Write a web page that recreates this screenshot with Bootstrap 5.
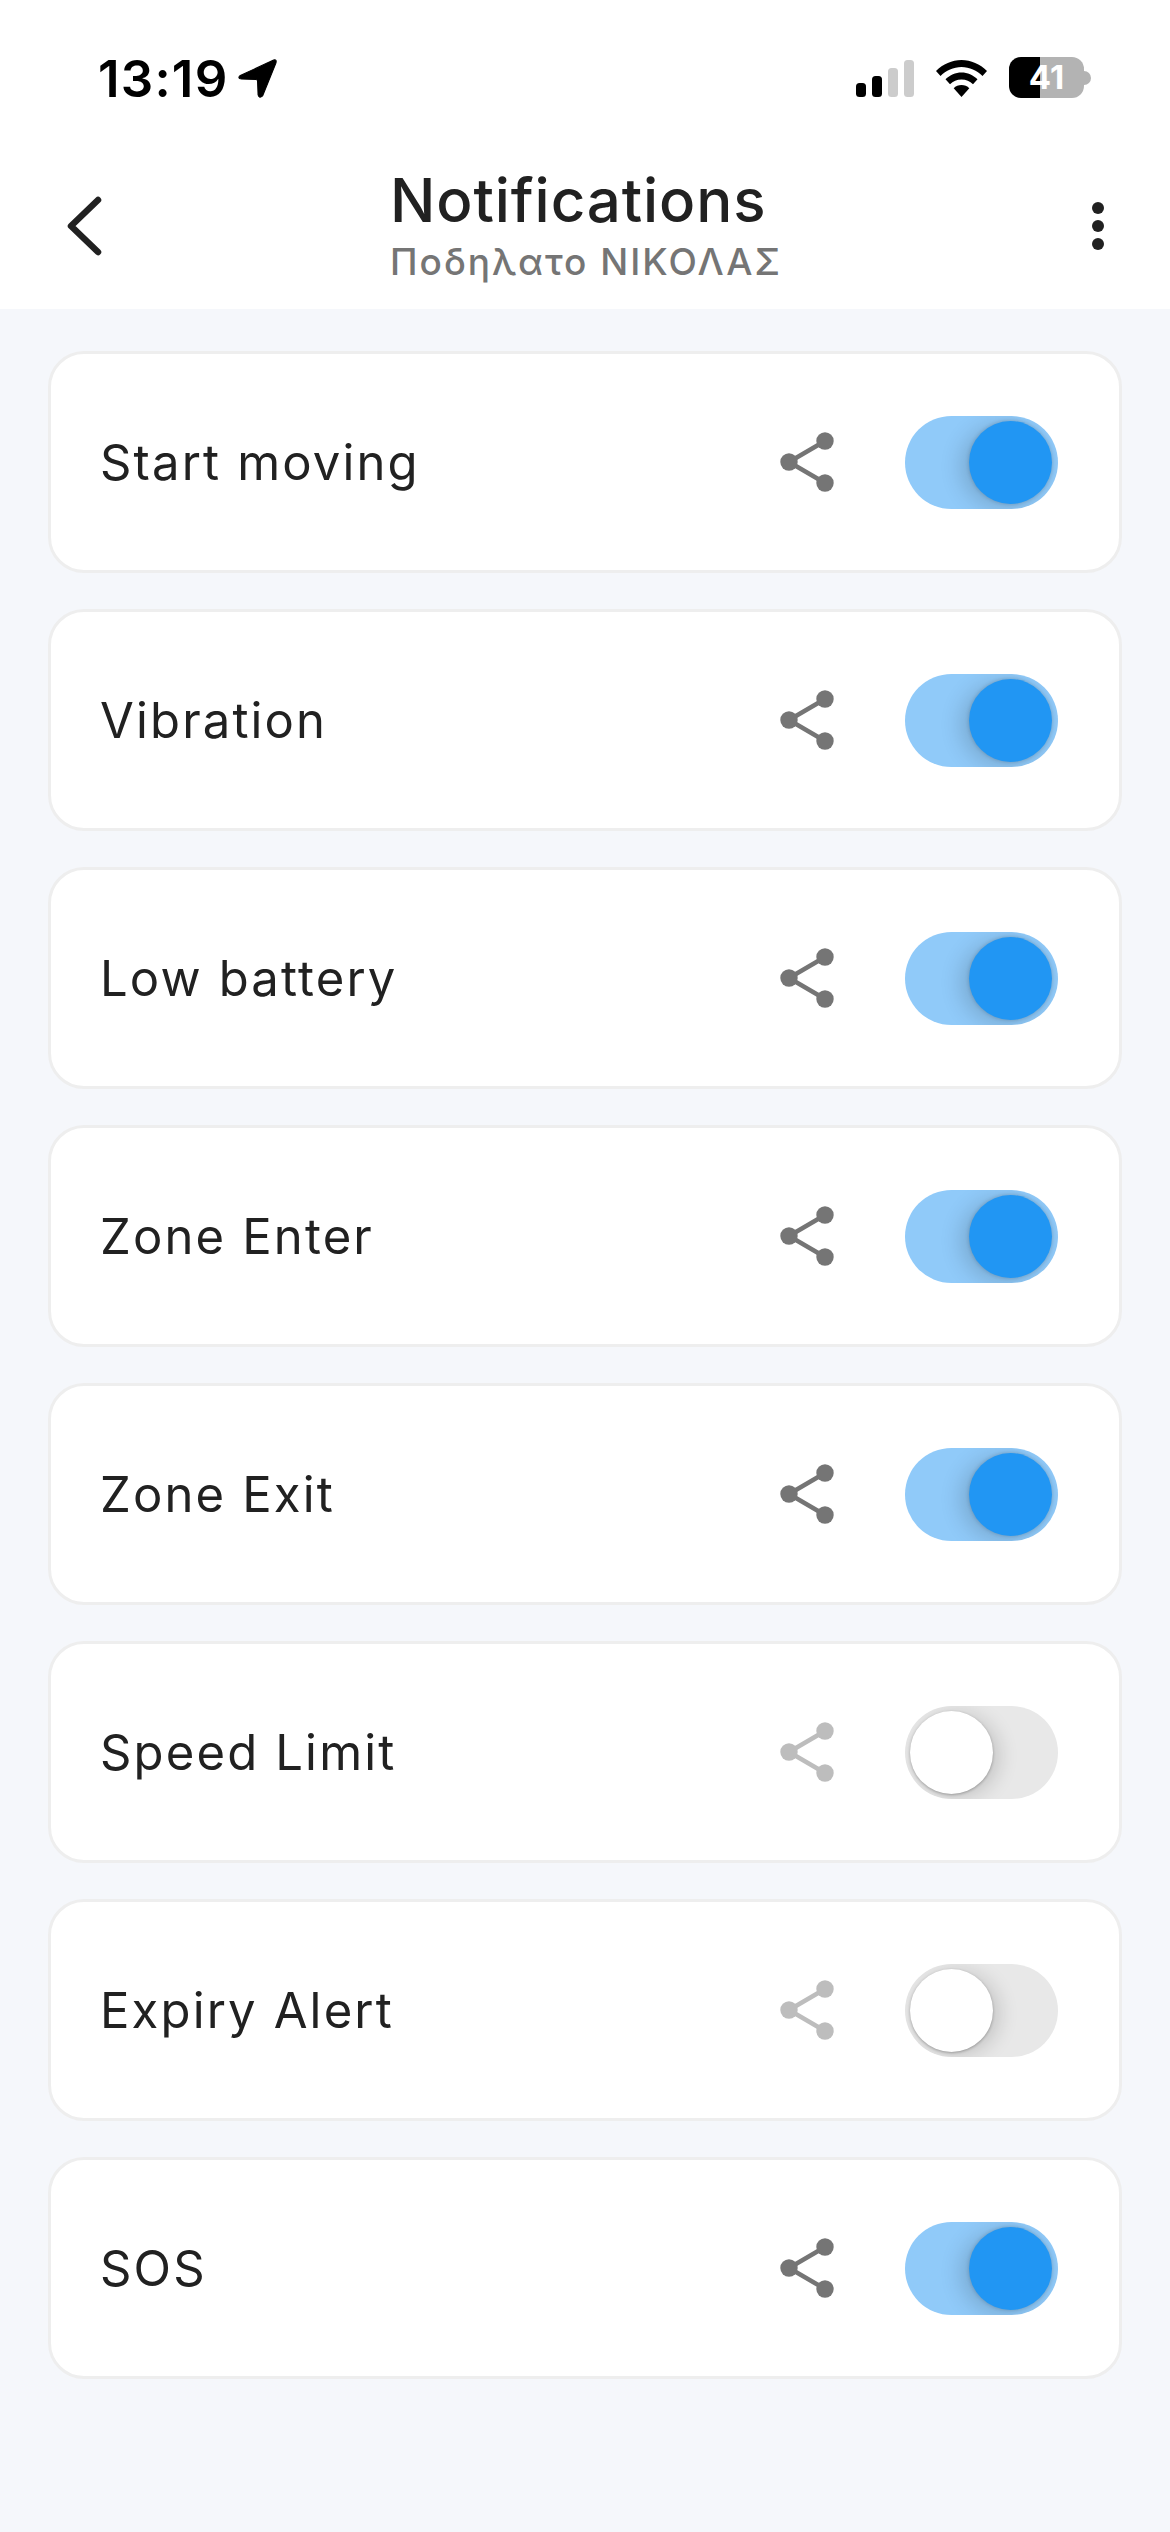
<!DOCTYPE html>
<html lang="en">
<head>
<meta charset="utf-8">
<title>Notifications</title>
<link href="https://cdn.jsdelivr.net/npm/bootstrap@5.3.0/dist/css/bootstrap.min.css" rel="stylesheet">
<style>
html,body{background:#f5f7fb;}
body{width:1170px;height:2532px;overflow:hidden;font-family:Inter,"Liberation Sans",sans-serif;color:#212121;}
.top-area{background:#fff;height:309px;}
.status-row{height:150px;padding:0 79px 0 98px;}
.time-text{font-family:Inter,"Liberation Sans",sans-serif;font-weight:600;font-size:51px;line-height:1;color:#000;letter-spacing:1.2px;}
.status-left{gap:9px;height:156px;}
.status-right{gap:30px;height:150px;padding-top:60px;}
.batt-wrap{margin-top:-3px;margin-left:-8px;}
.batt-body{width:75px;height:41px;border-radius:12px;background:linear-gradient(90deg,#000 0,#000 41%,#b3b3b3 41%,#b3b3b3 100%);color:#fff;font-family:Inter,"Liberation Sans",sans-serif;font-weight:700;font-size:33px;line-height:41px;text-align:center;}
.batt-nub{width:7px;height:14px;background:#b3b3b3;border-radius:0 7px 7px 0;}
.wifi-ico{margin-left:-8px;}
.head-row{height:159px;padding-left:66px;padding-right:66px;}
.side-slot{width:329px;margin-top:-8px;}
.side-slot-r{width:331px;margin-top:-8px;}
.title-col{width:388px;}
.head-title{font-size:60px;font-weight:500;line-height:68px;letter-spacing:.9px;margin:-10px 0 6px;color:#212121;white-space:nowrap;}
.head-sub{font-size:37px;font-weight:500;line-height:44px;letter-spacing:2px;color:#757575;white-space:nowrap;}
.list-area{padding:42px 48px 0;gap:36px;}
.notif-card{height:222px;border:3px solid #eee;border-radius:36px;background:#fff;padding:0 61px 0 49px;}
.notif-label{font-size:49px;letter-spacing:2.15px;color:#212121;line-height:1;}
.share-ico{width:54px;height:60px;color:#757575;margin-right:71px;}
.share-off{color:#bdbdbd;}
.tog-track{width:153px;height:93px;border-radius:47px;padding:0 6px;background:#90caf9;overflow:hidden;}
.tog-off{background:#e8e8e8;padding:0 5px;}
.tog-knob{width:83px;height:83px;border-radius:50%;background:#2196f3;box-shadow:-8px 4px 22px rgba(0,0,0,.16),0 0 4px rgba(0,0,0,.2);}
.tog-off .tog-knob{background:#fff;box-shadow:6px 3px 20px rgba(0,0,0,.16),0 1px 3px rgba(0,0,0,.28);}
</style>
</head>
<body>
<div class="top-area">
  <div class="status-row d-flex justify-content-between">
    <div class="status-left d-flex align-items-center">
      <span class="time-text">13:19</span>
      <svg width="40" height="40" viewBox="0 0 36 39" preserveAspectRatio="none"><path d="M33 2 L3 17 Q0 20 4 20.500 L17 21 Q18.500 21 18.500 22.500 L19 36 Q20 40 23 37 L35 5 Q36 1 33 2Z" fill="#000" stroke="#000" stroke-width="1" stroke-linejoin="round"/></svg>
    </div>
    <div class="status-right d-flex">
      <svg width="58" height="37" viewBox="0 0 58 37"><rect x="0" y="23" width="10" height="14" rx="3.500" fill="#000"/><rect x="16" y="16" width="10" height="21" rx="3.500" fill="#000"/><rect x="32" y="8" width="10" height="29" rx="3.500" fill="#ccc"/><rect x="48" y="0" width="10" height="37" rx="3.500" fill="#ccc"/></svg>
      <svg class="wifi-ico" width="51" height="37" viewBox="0 0 51 37"><path d="M25.500 0C16 0 7 4 0 11l4.500 5C10 10.500 17.500 7 25.500 7S41 10.500 46.500 16L51 11C44 4 35 0 25.500 0Z" fill="#000"/><path d="M25.500 12.500c-6 0-11.500 2.500-16 6.800l4.500 5c3-3 7-4.800 11.500-4.800s8.500 1.800 11.500 4.800l4.500-5c-4.500-4.300-10-6.800-16-6.800Z" fill="#000"/><path d="M25.500 25c-3 0-5.800 1.200-7.800 3.200L25.500 37l7.800-8.800c-2-2-4.800-3.200-7.800-3.200Z" fill="#000"/></svg>
      <div class="batt-wrap d-flex align-items-center align-self-start">
        <div class="batt-body">41</div>
        <div class="batt-nub"></div>
      </div>
    </div>
  </div>
  <div class="head-row d-flex align-items-center justify-content-between">
    <div class="side-slot d-flex">
      <svg width="36" height="60" viewBox="0 0 36 60"><path d="M32 4 L5 30 L32 56" fill="none" stroke="#212121" stroke-width="6.500" stroke-linecap="round" stroke-linejoin="round"/></svg>
    </div>
    <div class="title-col">
      <h1 class="head-title">Notifications</h1>
      <div class="head-sub">Ποδηλατο ΝΙΚΟΛΑΣ</div>
    </div>
    <div class="side-slot-r d-flex justify-content-end">
      <svg width="12" height="48" viewBox="0 0 12 48"><circle cx="6" cy="6" r="6" fill="#212121"/><circle cx="6" cy="24" r="6" fill="#212121"/><circle cx="6" cy="42" r="6" fill="#212121"/></svg>
    </div>
  </div>
</div>
<div class="list-area d-flex flex-column">
  <div class="card notif-card flex-row align-items-center"><span class="notif-label flex-grow-1">Start moving</span><svg class="share-ico" viewBox="0 0 54 60"><use href="#shr"/></svg><div class="tog-track d-flex align-items-center justify-content-end"><div class="tog-knob"></div></div></div>
  <div class="card notif-card flex-row align-items-center"><span class="notif-label flex-grow-1">Vibration</span><svg class="share-ico" viewBox="0 0 54 60"><use href="#shr"/></svg><div class="tog-track d-flex align-items-center justify-content-end"><div class="tog-knob"></div></div></div>
  <div class="card notif-card flex-row align-items-center"><span class="notif-label flex-grow-1">Low battery</span><svg class="share-ico" viewBox="0 0 54 60"><use href="#shr"/></svg><div class="tog-track d-flex align-items-center justify-content-end"><div class="tog-knob"></div></div></div>
  <div class="card notif-card flex-row align-items-center"><span class="notif-label flex-grow-1">Zone Enter</span><svg class="share-ico" viewBox="0 0 54 60"><use href="#shr"/></svg><div class="tog-track d-flex align-items-center justify-content-end"><div class="tog-knob"></div></div></div>
  <div class="card notif-card flex-row align-items-center"><span class="notif-label flex-grow-1">Zone Exit</span><svg class="share-ico" viewBox="0 0 54 60"><use href="#shr"/></svg><div class="tog-track d-flex align-items-center justify-content-end"><div class="tog-knob"></div></div></div>
  <div class="card notif-card flex-row align-items-center"><span class="notif-label flex-grow-1">Speed Limit</span><svg class="share-ico share-off" viewBox="0 0 54 60"><use href="#shr"/></svg><div class="tog-track tog-off d-flex align-items-center justify-content-start"><div class="tog-knob"></div></div></div>
  <div class="card notif-card flex-row align-items-center"><span class="notif-label flex-grow-1">Expiry Alert</span><svg class="share-ico share-off" viewBox="0 0 54 60"><use href="#shr"/></svg><div class="tog-track tog-off d-flex align-items-center justify-content-start"><div class="tog-knob"></div></div></div>
  <div class="card notif-card flex-row align-items-center"><span class="notif-label flex-grow-1">SOS</span><svg class="share-ico" viewBox="0 0 54 60"><use href="#shr"/></svg><div class="tog-track d-flex align-items-center justify-content-end"><div class="tog-knob"></div></div></div>
</div>
<svg width="0" height="0" class="d-block"><defs><g id="shr" fill="currentColor" stroke="currentColor"><path d="M45 9 L9 30 L45 51" fill="none" stroke-width="4.500"/><circle cx="9" cy="30" r="8.700" stroke="none"/><circle cx="45" cy="9" r="8.700" stroke="none"/><circle cx="45" cy="51" r="8.700" stroke="none"/></g></defs></svg>
<script src="https://cdn.jsdelivr.net/npm/bootstrap@5.3.0/dist/js/bootstrap.bundle.min.js"></script>
</body>
</html>
